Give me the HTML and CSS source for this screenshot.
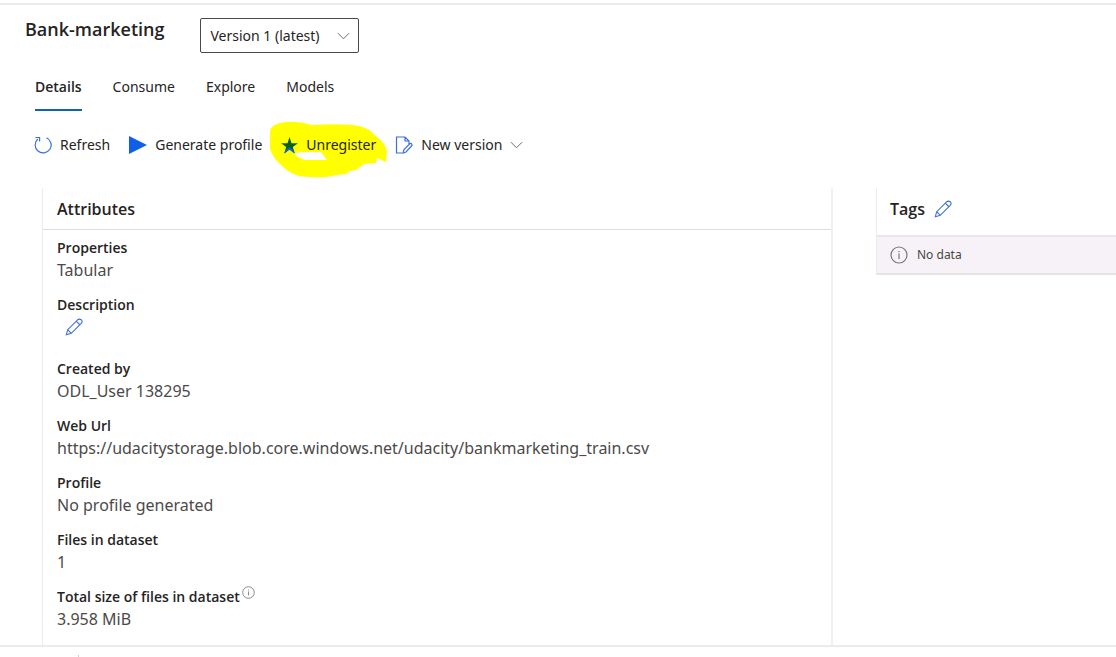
FILE: index.html
```html
<!DOCTYPE html>
<html lang="en">
<head>
<meta charset="utf-8">
<title>Bank-marketing</title>
<link rel="stylesheet" href="styles.css">
</head>
<body>
<svg class="defs" aria-hidden="true">
  <symbol id="pencil" viewBox="0 0 20 20"><path d="M1.5 18.5 3 13 14 2Q16 .5 18 2T18 6L7 17ZM3 13 7 17M12.5 3.5 16.5 7.5"/></symbol>
  <symbol id="chevron" viewBox="0 0 14 8"><path d="M1 1 7 7 13 1"/></symbol>
  <symbol id="info" viewBox="0 0 18 18"><circle cx="9" cy="9" r="8"/><path d="M9 7.5V13M9 5V6.2"/></symbol>
</svg>
<header class="page-header">
  <h1 class="title">Bank-marketing</h1>
  <div class="version">
    <select class="version-select" aria-label="Version"><option>Version 1 (latest)</option></select>
    <svg class="icon chevron version-chevron"><use href="#chevron"/></svg>
  </div>
</header>
<nav class="tabs" aria-label="Dataset">
  <a class="tab tab-active" href="#details">Details</a>
  <a class="tab" href="#consume">Consume</a>
  <a class="tab" href="#explore">Explore</a>
  <a class="tab" href="#models">Models</a>
</nav>
<div class="toolbar">
  <button class="command refresh" type="button">
    <svg class="icon blue" width="18" height="20" viewBox="1 0 18 20"><path d="M13.5 2.7A8 8 0 1 1 4.8 4M2.5 2.5H6.6V6.6"/></svg>Refresh</button>
  <button class="command generate" type="button">
    <svg width="18" height="18" viewBox="0 0 18 18"><path class="fill-blue" d="M0 0 18 9 0 18Z"/></svg>Generate profile</button>
  <button class="command unregister" type="button">
    <svg class="marker" width="120" height="58" viewBox="0 0 120 58"><path class="marker-ink" d="M1 10Q2 3 16 1 30 0 42 4 76 2 90 5 100 7 107 15 117 23 118 30L117 41 108 37 107 42 95 43 87 49 81 50 77 53 67 54Q54 58 30 55 18 51 12 44 4 37 1 28Z"/><path class="marker-gap" d="M25 32 35 31 52 31 58 39 36 39 29 36Z"/></svg>
    <svg class="front" width="17" height="17" viewBox="0 0 18 18"><path class="fill-green" d="M9 0 11.1 6.5H18L12.5 10.6 14.6 17.4 9 13.2 3.4 17.4 5.5 10.6 0 6.5H6.9Z"/><path class="fill-blue" d="M5 13.5 9 11 13 13.5 14.6 17.4 9 13.2 3.4 17.4Z"/></svg><span class="front">Unregister</span></button>
  <button class="command new-version" type="button">
    <svg class="icon blue" width="18" height="18" viewBox="0 0 18 18"><path d="M7 17H1.5V1H10L14 5V8M10 1V5H14M8 17 9 13.5 15 7.5Q17 7 17 9.5L11 16Z"/></svg>New version
    <svg class="icon chevron"><use href="#chevron"/></svg></button>
</div>
<main class="content">
  <section class="card attributes">
    <h2 class="card-title">Attributes</h2>
    <dl class="properties">
      <div><dt>Properties</dt><dd>Tabular</dd></div>
      <div><dt>Description</dt><dd class="edit"><button class="icon-button" type="button" aria-label="Edit description"><svg class="icon blue" width="18" height="18"><use href="#pencil"/></svg></button></dd></div>
      <div><dt>Created by</dt><dd>ODL_User 138295</dd></div>
      <div><dt>Web Url</dt><dd>https://udacitystorage.blob.core.windows.net/udacity/bankmarketing_train.csv</dd></div>
      <div><dt>Profile</dt><dd>No profile generated</dd></div>
      <div><dt>Files in dataset</dt><dd>1</dd></div>
      <div><dt class="with-info">Total size of files in dataset<svg class="icon gray" width="13" height="13"><use href="#info"/></svg></dt><dd>3.958 MiB</dd></div>
    </dl>
  </section>
  <section class="card tags">
    <h2 class="card-title">Tags<button class="icon-button" type="button" aria-label="Edit tags"><svg class="icon blue" width="18" height="18"><use href="#pencil"/></svg></button></h2>
    <p class="empty"><svg class="icon gray" width="18" height="18"><use href="#info"/></svg>No data</p>
  </section>
</main>
<footer class="footer"><div class="footer-divider"></div></footer>
</body>
</html>
```
FILE: styles.css
```css
* {
  box-sizing: border-box;
}

body {
  display: flex;
  flex-direction: column;
  min-height: 100vh;
  margin: 0;
  padding-top: 3px;
  background: #fff;
  color: #252423;
  font-family: "Noto Sans", "Open Sans", sans-serif;
  font-size: 14px;
  line-height: 22px;
}

h1, h2, p, dl, dd {
  margin: 0;
}

button, select {
  border: 0;
  background: none;
  color: inherit;
  font: inherit;
}

svg {
  flex: none;
}

.defs {
  position: absolute;
  width: 0;
  height: 0;
}

.icon {
  fill: none;
  stroke: #605e5c;
  stroke-width: 1.2;
}

.blue {
  stroke: #3b6fd8;
}

.gray {
  stroke: #777;
}

.chevron {
  width: 13px;
  height: 8px;
  stroke-width: 1;
}

.fill-blue {
  fill: #0f5fe8;
}

.fill-green {
  fill: #08601c;
}

.page-header {
  display: flex;
  align-items: flex-start;
  gap: 36px;
  padding: 13px 25px 0;
  border-top: 2px solid #ebebeb;
}

.title,
.tab-active,
.card-title,
.properties dt {
  font-family: "Open Sans", "Noto Sans", sans-serif;
  font-weight: 600;
}

.title {
  font-size: 18px;
  line-height: 22px;
}

.version {
  position: relative;
}

.version-select {
  appearance: none;
  width: 159px;
  height: 35px;
  padding: 0 30px 0 9px;
  border: 1px solid #4a4948;
  border-radius: 2px;
}

.version-chevron {
  position: absolute;
  top: 14px;
  right: 9px;
  pointer-events: none;
}

.tabs {
  display: flex;
  gap: 31px;
  padding: 23px 35px 0;
}

.tab {
  padding-bottom: 11px;
  border-bottom: 2px solid transparent;
  color: inherit;
  text-decoration: none;
}

.tab-active {
  border-color: #1160b7;
}

.toolbar {
  display: flex;
  align-items: center;
  gap: 19px;
  padding: 23px 34px 0;
}

.command {
  display: flex;
  align-items: center;
  gap: 8px;
  padding: 0;
  white-space: nowrap;
}

.unregister {
  position: relative;
}

.marker {
  position: absolute;
  top: -13px;
  left: -12px;
}

.front {
  position: relative;
}

.marker-ink {
  fill: #ff0;
}

.marker-gap {
  fill: #fff;
}

.content {
  display: grid;
  flex: 1;
  grid-template-columns: minmax(0, 791fr) minmax(0, 240fr);
  gap: 43px;
  padding: 32px 0 0 42px;
}

.card {
  border-left: 1px solid #ebebeb;
}

.attributes {
  border-right: 2px solid #f0f0f0;
}

.card-title {
  display: flex;
  align-items: center;
  gap: 9px;
  font-size: 16px;
}

.attributes .card-title {
  height: 42px;
  padding-left: 14px;
  border-bottom: 1px solid #ddd;
}

.tags .card-title {
  height: 49px;
  padding: 0 13px 6px;
  border-bottom: 2px solid #e9e5e9;
}

.properties {
  display: grid;
  gap: 12px;
  padding: 7px 14px 14px;
}

.properties dd {
  color: #4b4a49;
  font-size: 16px;
  line-height: 23px;
}

.properties .edit {
  height: 30px;
  padding: 2px 8px;
}

.icon-button {
  display: flex;
  padding: 0;
}

.with-info {
  display: flex;
  align-items: flex-start;
  gap: 2px;
}

.tags {
  align-self: start;
}

.empty {
  display: flex;
  align-items: center;
  gap: 9px;
  height: 38px;
  padding: 0 13px;
  border-bottom: 2px solid #e6e2e6;
  background: #f7f2f7;
  color: #484644;
  font-size: 12px;
}

.footer {
  height: 12px;
  padding: 8px 78px 0;
  border-top: 2px solid #ebebeb;
}

.footer-divider {
  width: 1px;
  height: 2px;
  background: #ccc;
}
```
